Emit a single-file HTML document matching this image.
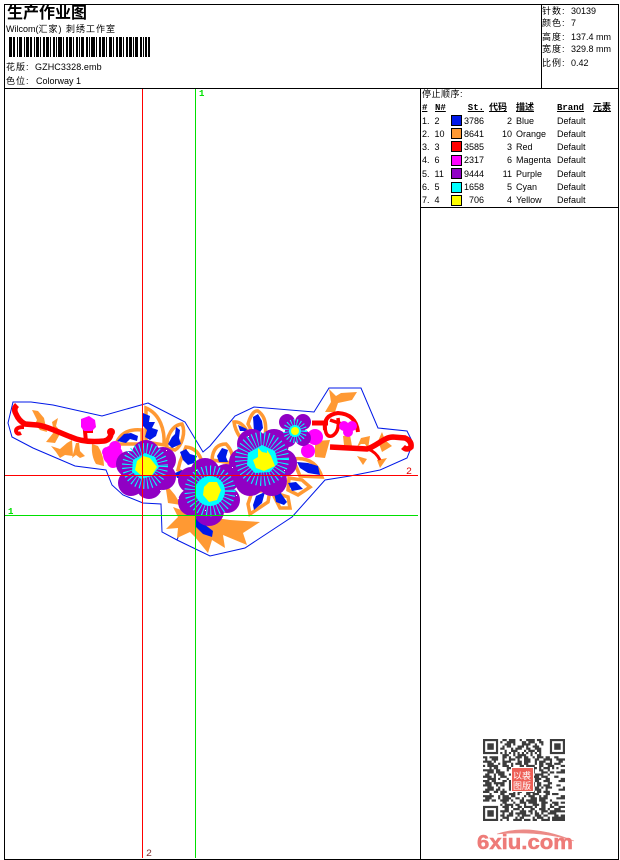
<!DOCTYPE html>
<html lang="zh">
<head>
<meta charset="utf-8">
<title>生产作业图</title>
<style>
html,body{margin:0;padding:0;background:#fff;width:620px;height:860px;overflow:hidden}
#p{position:relative;width:620px;height:860px;overflow:hidden;font-family:"Liberation Sans","WenQuanYi Zen Hei","Noto Sans CJK SC",sans-serif;color:#000}
svg{position:absolute;left:0;top:0}
.t{position:absolute;white-space:pre;font-size:9px;line-height:11px}
.b{font-weight:bold;text-decoration:underline;font-family:"Liberation Mono","WenQuanYi Zen Hei","Noto Sans CJK SC",monospace}
.s{position:absolute;left:451px;width:9px;height:9px;border:1px solid #000}
</style>
</head>
<body>
<div id="p">
<svg width="620" height="860" viewBox="0 0 620 860">
<g stroke-width="1" fill="none">
<path d="M148 403L185 422L197 442L203 452L210 446L225 428L235 416L254 407L314 412L329 388L361 388L378 428L407 431L413 443L407 458L380 470L350 476L325 480L292 517L245 548L210 556L177 540L162 532L161 504L143 503L123 495L112 485L106 470L75 466L33 448L12 437L8 423L13 402L31 402L53 405L102 416Z" stroke="#0018e8"/>
<path d="M177 540L181 530" stroke="#0018e8"/>
</g>
<g fill="#ff9933">
<path d="M32 410L38 411L44 418L47 432L40 430L35 424L37 420Z"/>
<path d="M58 418L52 422L54 432L46 442L55 443L61 432L56 426Z"/>
<path d="M51 446L60 449L67 443L72 440L73 456L65 455L60 458L56 452Z"/>
<path d="M76 443L79 443L80 451L85 456L80 458L76 455L72 458Z"/>
<path d="M92 444L98 446Q104 456 104 466L96 464Q91 456 92 444Z"/>
<path d="M329 389L336 396L341 393L357 392L352 400L338 403L335 412L325 412L331 402Z"/>
<path d="M315 441L330 440L325 458L315 457Z"/>
<path d="M343 436L350 435L352 446L344 445Z"/>
<path d="M357 447L361 438L370 436L368 449L365 444L361 444Z"/>
<path d="M378 441L382 432L385 440L392 446L382 452Z"/>
<path d="M357 456L367 459L363 465Z"/>
<path d="M377 460L387 458L380 468Z"/>
<path d="M165 483L175 495L181 505L168 503Z"/>
<path d="M173 507L195 515L230 520L260 522L243 533L247 545L223 535L225 548L212 540L208 553L195 537L190 532L177 538L178 528L166 529L178 517Z"/>
</g>
<g fill="#fff" stroke="#ff9933" stroke-width="3.500">
<path d="M146 408C160 414 165 430 164 445L146 442Z"/>
<path d="M116 444Q122 428 142 430L142 444Z"/>
<path d="M167 448C166 437 172 425 182 424C186 432 182 446 175 450Z"/>
<path d="M180 462L186 447Q198 448 202 462L190 476L178 470Z"/>
<path d="M212 460Q213 444 226 444Q234 452 232 463Z"/>
<path d="M234 422Q242 421 248 433L240 437Q235 430 234 422Z"/>
<path d="M248 424Q252 410 258 411Q268 418 265 436L254 436Z"/>
<path d="M293 459Q315 456 322 477L300 476Z"/>
<path d="M289 478L302 480L310 487L298 495L288 490Z"/>
<path d="M272 492L288 497L290 508L280 508Z"/>
<path d="M252 492L270 490L268 502L250 514L248 504Z"/>
</g>
<g fill="#0018e8">
<path d="M143 413L150 416L149 422L155 422L152 428L158 430L156 436L150 440L145 437L147 430L143 426Z"/>
<path d="M117 441L124 434L131 433L138 436L137 441L130 439L126 443Z"/>
<path d="M168 444L172 437L175 434L176 427L180 430L179 438L181 444L172 448Z"/>
<path d="M180 452L186 449L190 454L197 456L194 463L188 465L183 460Z"/>
<path d="M175 473L182 470L183 478L177 478Z"/>
<path d="M217 456L222 448L228 450L226 457L228 462L219 462Z"/>
<path d="M238 425L247 429L246 431L240 431Z"/>
<path d="M253 417L258 414L262 421L263 428L258 435L254 432Z"/>
<path d="M297 462L308 463L318 466L320 475L308 473L300 468Z"/>
<path d="M288 483L296 482L303 489L292 491Z"/>
<path d="M274 493L280 492L287 502L284 505L276 502Z"/>
<path d="M253 505L256 496L265 492L262 503L254 510Z"/>
<path d="M195 518L204 524L213 531L212 537L203 534L196 527Z"/>
</g>
<g fill="#ff0000">
<path fill="none" stroke="#ff0000" stroke-width="5.500" d="M17 405Q13 409 16 414Q19 421 25 424L37 425C47 426 60 433 71 437C82 442 95 442 104 441Q110 440 111 434"/>
<path fill="none" stroke="#ff0000" stroke-width="4" d="M24 427Q16 427 16 431Q17 435 21 433"/>
<path fill="none" stroke="#ff0000" stroke-width="4" d="M86 442L85 431H93"/>
<circle cx="111" cy="432" r="4"/>
<path fill="none" stroke="#ff0000" stroke-width="5" d="M312 423H328"/>
<path fill="none" stroke="#ff0000" stroke-width="4" d="M325 430Q323 415 338 413Q356 414 358 432"/>
<path fill="none" stroke="#ff0000" stroke-width="3.500" d="M325 425Q325 438 332 436Q340 432 338 418M330 420L342 424"/>
<path fill="none" stroke="#ff0000" stroke-width="5.500" d="M330 447L367 449C377 446 384 437 393 437L405 438Q412 441 411 447Q407 451 403 447"/>
<path fill="none" stroke="#ff0000" stroke-width="3" d="M368 449Q376 452 380 460"/>
</g>
<g fill="#ff00ff">
<path d="M81 419L89 416L95 420L96 427L92 431L84 431L81 427Z"/>
<circle cx="113" cy="455" r="10"/><circle cx="107" cy="452" r="5"/><circle cx="115" cy="447" r="6"/><circle cx="113" cy="462" r="6"/>
<circle cx="344" cy="426" r="5"/><circle cx="352" cy="426" r="5"/><circle cx="348" cy="432" r="5"/>
<circle cx="315" cy="437" r="8"/>
<circle cx="308" cy="451" r="7"/>
</g>
<g fill="#9000c4">
<circle cx="146" cy="469" r="22"/>
<circle cx="146" cy="454" r="14"/><circle cx="163" cy="460" r="13"/><circle cx="163" cy="477" r="13"/><circle cx="149" cy="486" r="13"/><circle cx="131" cy="483" r="13"/><circle cx="129" cy="464" r="13"/>
<circle cx="209" cy="491" r="24"/>
<circle cx="205" cy="473" r="15"/><circle cx="226" cy="478" r="14"/><circle cx="227" cy="500" r="13"/><circle cx="209" cy="511" r="15"/><circle cx="192" cy="502" r="14"/><circle cx="191" cy="480" r="13"/>
<circle cx="263" cy="462" r="25"/>
<circle cx="252" cy="444" r="15"/><circle cx="274" cy="444" r="15"/><circle cx="283" cy="463" r="14"/><circle cx="272" cy="481" r="15"/><circle cx="250" cy="481" r="15"/><circle cx="243" cy="462" r="14"/>
<circle cx="295" cy="431" r="10"/>
<circle cx="287" cy="422" r="8"/><circle cx="303" cy="422" r="8"/><circle cx="303" cy="438" r="8"/><circle cx="288" cy="439" r="8"/>
</g>
<g fill="none" stroke="#00ffff">
<circle cx="145" cy="466" r="15" stroke-width="16" stroke-dasharray=".8 2.200"/>
<circle cx="210" cy="491" r="17" stroke-width="17" stroke-dasharray=".8 2.400"/>
<circle cx="262" cy="459" r="18" stroke-width="18" stroke-dasharray=".8 2.400"/>
<circle cx="295" cy="431" r="8" stroke-width="8" stroke-dasharray=".8 1.800"/>
</g>
<g fill="#00ffff">
<path d="M145 453L155 457L159 467L152 476L141 479L132 472L133 460Z"/>
<circle cx="210" cy="491" r="15"/>
<path d="M262 445L275 451L278 463L270 472L255 473L247 465L248 453Z"/>
<circle cx="295" cy="431" r="6"/>
</g>
<g fill="#ffff00">
<path d="M143 456L150 458L157 467L152 475L142 476L135 470L137 461Z"/>
<path d="M209 482L217 482L221 490L217 500L209 502L203 495L204 487Z"/>
<path d="M258 448L262 452L267 453L267 450L271 456L275 466L264 471L256 468L253 460L258 457Z"/>
<circle cx="295" cy="431" r="4"/>
</g>
<g fill="#fff">
<rect x="166" y="450" width="1" height="1"/><rect x="160" y="490" width="1" height="1"/><rect x="128" y="452" width="1" height="1"/><rect x="196" y="470" width="1" height="1"/><rect x="236" y="495" width="1" height="1"/><rect x="232" y="467" width="1" height="1"/><rect x="248" y="436" width="1" height="1"/><rect x="284" y="470" width="1" height="1"/><rect x="205" y="510" width="1" height="1"/><rect x="178" y="498" width="1" height="1"/>
</g>
<g stroke-width="1" fill="none" shape-rendering="crispEdges">
<path d="M4 475.500H418" stroke="#ff0000"/>
<path d="M4 515.500H418" stroke="#00e000"/>
<path d="M142.500 89V858" stroke="#ff0000"/>
<path d="M195.500 89V858" stroke="#00e000"/>
<path d="M4.500 4.500H618.500V859.500H4.500ZM4 88.500H618M541.500 4V88M420.500 89V859M420 207.500H618" stroke="#000"/>
</g>
<path fill="#000" d="M9 37h3v20h-3zM13 37h2v20h-2zM17 37h1v20h-1zM19 37h3v20h-3zM24 37h1v20h-1zM26 37h3v20h-3zM30 37h2v20h-2zM34 37h1v20h-1zM36 37h3v20h-3zM40 37h1v20h-1zM43 37h2v20h-2zM46 37h3v20h-3zM50 37h1v20h-1zM53 37h2v20h-2zM56 37h1v20h-1zM58 37h4v20h-4zM63 37h1v20h-1zM66 37h2v20h-2zM69 37h3v20h-3zM73 37h1v20h-1zM76 37h2v20h-2zM79 37h1v20h-1zM81 37h3v20h-3zM86 37h2v20h-2zM89 37h1v20h-1zM91 37h4v20h-4zM96 37h1v20h-1zM99 37h2v20h-2zM102 37h3v20h-3zM106 37h1v20h-1zM109 37h3v20h-3zM113 37h1v20h-1zM116 37h2v20h-2zM119 37h3v20h-3zM123 37h1v20h-1zM126 37h2v20h-2zM129 37h3v20h-3zM133 37h1v20h-1zM135 37h3v20h-3zM140 37h2v20h-2zM143 37h1v20h-1zM145 37h2v20h-2zM148 37h2v20h-2z"/>
<svg x="483" y="739" width="82" height="82" viewBox="0 0 38 38">
<path fill="none" stroke="#3c3c3c" stroke-width="1" d="M9 .5h2m1 0h3m2 0h1m2 0h4m1 0h2M8 1.500h1m2 0h4m3 0h2m1 0h3m2 0h2M10 2.500h3m1 0h1m3 0h4m2 0h1m2 0h1M9 3.500h1m1 0h2m3 0h3m1 0h1m2 0h3M8 4.500h2m3 0h1m1 0h3m2 0h2m2 0h3M10 5.500h1m2 0h3m3 0h1m1 0h3m1 0h2M8 6.500h1m1 0h1m1 0h1m1 0h1m1 0h1m1 0h1m1 0h1m1 0h1m1 0h1m1 0h1M9 7.500h3m2 0h1m1 0h4m2 0h1m2 0h2
M0 8.500h2m1 0h4m2 0h2m1 0h1m2 0h3m1 0h2m2 0h1m1 0h3m1 0h2m2 0h2
M1 9.500h1m2 0h3m2 0h1m2 0h3m1 0h1m2 0h3m2 0h2m2 0h4
M0 10.500h4m1 0h1m3 0h4m3 0h2m1 0h3m2 0h1m1 0h3m2 0h1
M2 11.500h3m2 0h1m1 0h2m2 0h1m1 0h3m1 0h2m3 0h1m1 0h2m1 0h3
M0 12.500h1m1 0h5m2 0h3m1 0h1m3 0h2m1 0h4m2 0h2m2 0h3
M3 13.500h1m1 0h2m4 0h3m1 0h1m2 0h2m3 0h2m1 0h1m1 0h3m1 0h1
M0 14.500h5m1 0h2m3 0h1m2 0h4m1 0h3m1 0h1m2 0h2m2 0h1
M2 15.500h3m1 0h4m3 0h1m1 0h2m2 0h3m1 0h1m3 0h3m1 0h2
M1 16.500h2m2 0h1m1 0h3m2 0h4m1 0h2m3 0h1m1 0h4m2 0h1
M0 17.500h4m1 0h1m2 0h3m3 0h2m1 0h1m3 0h5m1 0h3
M2 18.500h4m1 0h1m3 0h1m2 0h3m1 0h2m2 0h1m1 0h3m2 0h2
M0 19.500h3m1 0h2m3 0h2m1 0h4m1 0h1m2 0h1m3 0h2m2 0h3
M1 20.500h3m1 0h5m2 0h1m1 0h2m3 0h3m1 0h1m1 0h2m3 0h2
M0 21.500h4m2 0h1m1 0h2m2 0h3m3 0h1m1 0h4m1 0h2m1 0h3
M2 22.500h3m2 0h1m4 0h2m1 0h3m2 0h1m3 0h2m1 0h1m1 0h3
M1 23.500h4m1 0h2m1 0h1m2 0h5m1 0h2m2 0h1m1 0h3m2 0h1
M0 24.500h3m2 0h2m1 0h3m3 0h1m1 0h2m2 0h4m1 0h2m1 0h3
M3 25.500h1m4 0h2m2 0h3m1 0h1m3 0h2m1 0h3m3 0h2m1 0h1
M0 26.500h5m2 0h1m1 0h3m1 0h2m4 0h1m1 0h3m2 0h1m1 0h2
M1 27.500h3m3 0h1m1 0h4m2 0h2m1 0h1m3 0h3m1 0h4
M0 28.500h3m1 0h2m2 0h4m1 0h1m3 0h2m1 0h5m1 0h3m2 0h1
M9 29.500h2m3 0h1m2 0h3m1 0h4m2 0h3m2 0h3
M8 30.500h1m1 0h4m1 0h2m2 0h1m3 0h3m1 0h2m2 0h1m1 0h2
M9 31.500h3m1 0h1m2 0h2m1 0h4m1 0h1m2 0h2m2 0h2
M10 32.500h2m2 0h3m1 0h1m3 0h2m2 0h3m1 0h1m2 0h3
M8 33.500h4m1 0h1m3 0h3m1 0h2m1 0h1m2 0h3m1 0h3
M9 34.500h1m2 0h2m1 0h5m2 0h1m1 0h2m1 0h1m2 0h4
M8 35.500h2m1 0h3m2 0h1m1 0h4m2 0h3m1 0h2m3 0h2
M9 36.500h3m3 0h1m1 0h2m4 0h1m1 0h3m2 0h1m1 0h3
M8 37.500h1m2 0h1m2 0h4m1 0h3m1 0h2m2 0h4m1 0h2
M34 9.500h4M35 10.500h2M33 11.500h3M36 12.500h2M34 13.500h1M36 14.500h2M34 15.500h4M33 17.500h2M36 18.500h2M35 19.500h3M34 21.500h2M37 22.500h1M35 23.500h3M33 25.500h2M36 26.500h2M34 27.500h4M36 29.500h2M35 31.500h3M34 33.500h4M36 35.500h2M35 36.500h3M33 37.500h5"/>
<g fill="none" stroke="#3c3c3c" stroke-width="1">
<rect x=".5" y=".5" width="6" height="6"/><rect x="31.500" y=".5" width="6" height="6"/><rect x=".5" y="31.500" width="6" height="6"/>
</g>
<g fill="#3c3c3c"><rect x="2" y="2" width="3" height="3"/><rect x="33" y="2" width="3" height="3"/><rect x="2" y="33" width="3" height="3"/></g>
</svg>
<rect x="511" y="767" width="23" height="25" fill="#fff"/>
<rect x="512" y="768" width="21" height="23" fill="#ee5f56"/>
<text x="513" y="779" font-size="9" fill="#fff" font-family="'WenQuanYi Zen Hei','Noto Sans CJK SC',sans-serif">以裘</text>
<text x="513" y="789" font-size="9" fill="#fff" font-family="'WenQuanYi Zen Hei','Noto Sans CJK SC',sans-serif">图版</text>
<path d="M497 834Q530 823 574 841Q540 830 497 834Z" fill="#ec8a86" stroke="#ec8a86" stroke-width=".6"/>
<text x="477" y="849" font-size="20" font-weight="bold" fill="#ee7b78" stroke="#ee7b78" stroke-width=".5" textLength="96" lengthAdjust="spacingAndGlyphs" font-family="'Liberation Sans',sans-serif">6xiu.com</text>
<text x="199" y="96" font-size="9" font-weight="bold" fill="#00e000" font-family="'Liberation Mono',monospace">1</text>
<text x="8" y="514" font-size="9" font-weight="bold" fill="#00e000" font-family="'Liberation Mono',monospace">1</text>
<text x="406" y="474" font-size="10" fill="#e00000" font-family="'Liberation Mono',monospace">2</text>
<text x="146" y="856" font-size="10" fill="#803030" font-family="'Liberation Mono',monospace">2</text>
</svg>

<div class="t" style="left:7px;top:5px;font-size:16px;line-height:18px;font-weight:bold">生产作业图</div>
<div class="t" style="left:6px;top:24px">Wilcom(<span style="letter-spacing:1px">汇家) 刺绣工作室</span></div>
<div class="t" style="left:6px;top:62px;letter-spacing:1px">花版:</div><div class="t" style="left:35px;top:62px;letter-spacing:.1px">GZHC3328.emb</div>
<div class="t" style="left:6px;top:76px;letter-spacing:1px">色位:</div><div class="t" style="left:36px;top:76px">Colorway 1</div>

<div class="t" style="left:542px;top:6px;letter-spacing:1px">针数:</div><div class="t" style="left:571px;top:6px">30139</div>
<div class="t" style="left:542px;top:18px;letter-spacing:1px">颜色:</div><div class="t" style="left:571px;top:18px">7</div>
<div class="t" style="left:542px;top:32px;letter-spacing:1px">高度:</div><div class="t" style="left:571px;top:32px">137.4 mm</div>
<div class="t" style="left:542px;top:44px;letter-spacing:1px">宽度:</div><div class="t" style="left:571px;top:44px">329.8 mm</div>
<div class="t" style="left:542px;top:58px;letter-spacing:1px">比例:</div><div class="t" style="left:571px;top:58px">0.42</div>

<div class="t" style="left:422px;top:89px;letter-spacing:.5px">停止顺序:</div>
<div class="t b" style="left:422px;top:103px">#</div>
<div class="t b" style="left:435px;top:103px">N#</div>
<div class="t b" style="right:136px;top:103px">St.</div>
<div class="t b" style="left:489px;top:103px">代码</div>
<div class="t b" style="left:516px;top:103px">描述</div>
<div class="t b" style="left:557px;top:103px">Brand</div>
<div class="t b" style="left:593px;top:103px">元素</div>

<div class="t" style="left:422px;top:116px">1.  2</div><div class="s" style="top:115px;background:#0018e8"></div><div class="t" style="right:136px;top:116px">3786</div><div class="t" style="right:108px;top:116px">2</div><div class="t" style="left:516px;top:116px">Blue</div><div class="t" style="left:557px;top:116px">Default</div>
<div class="t" style="left:422px;top:129px">2.  10</div><div class="s" style="top:128px;background:#ff9933"></div><div class="t" style="right:136px;top:129px">8641</div><div class="t" style="right:108px;top:129px">10</div><div class="t" style="left:516px;top:129px">Orange</div><div class="t" style="left:557px;top:129px">Default</div>
<div class="t" style="left:422px;top:142px">3.  3</div><div class="s" style="top:141px;background:#ff0000"></div><div class="t" style="right:136px;top:142px">3585</div><div class="t" style="right:108px;top:142px">3</div><div class="t" style="left:516px;top:142px">Red</div><div class="t" style="left:557px;top:142px">Default</div>
<div class="t" style="left:422px;top:155px">4.  6</div><div class="s" style="top:155px;background:#ff00ff"></div><div class="t" style="right:136px;top:155px">2317</div><div class="t" style="right:108px;top:155px">6</div><div class="t" style="left:516px;top:155px">Magenta</div><div class="t" style="left:557px;top:155px">Default</div>
<div class="t" style="left:422px;top:169px">5.  11</div><div class="s" style="top:168px;background:#9000c4"></div><div class="t" style="right:136px;top:169px">9444</div><div class="t" style="right:108px;top:169px">11</div><div class="t" style="left:516px;top:169px">Purple</div><div class="t" style="left:557px;top:169px">Default</div>
<div class="t" style="left:422px;top:182px">6.  5</div><div class="s" style="top:182px;background:#00ffff"></div><div class="t" style="right:136px;top:182px">1658</div><div class="t" style="right:108px;top:182px">5</div><div class="t" style="left:516px;top:182px">Cyan</div><div class="t" style="left:557px;top:182px">Default</div>
<div class="t" style="left:422px;top:195px">7.  4</div><div class="s" style="top:195px;background:#ffff00"></div><div class="t" style="right:136px;top:195px">706</div><div class="t" style="right:108px;top:195px">4</div><div class="t" style="left:516px;top:195px">Yellow</div><div class="t" style="left:557px;top:195px">Default</div>
</div>
</body>
</html>
